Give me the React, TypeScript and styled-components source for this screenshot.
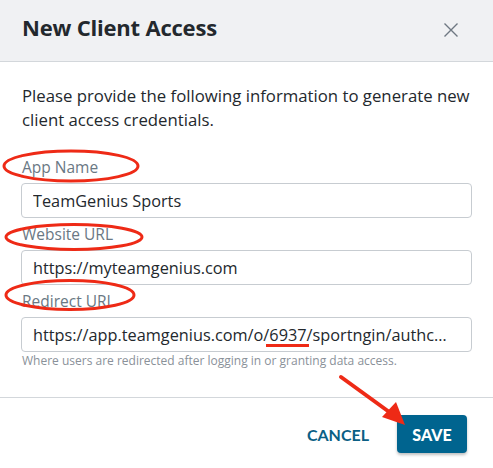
import React from "react";
import { createGlobalStyle, styled } from "styled-components";

const GlobalStyle = createGlobalStyle`
  html, body {
    margin: 0;
    padding: 0;
    background: #fff;
  }
  body {
    font-family: "Open Sans", "Liberation Sans", sans-serif;
    color: #22272c;
  }
`;

type Field = {
  label: string;
  value: string;
  help?: string;
};

const fields: Field[] = [
  { label: "App Name", value: "TeamGenius Sports" },
  { label: "Website URL", value: "https://myteamgenius.com" },
  {
    label: "Redirect URI",
    value: "https://app.teamgenius.com/o/6937/sportngin/authcallback",
    help: "Where users are redirected after logging in or granting data access.",
  },
];

const CloseIcon = () => (
  <svg width="16" height="16" viewBox="0 0 16 16">
    <path d="M1.5 1.5 L14.5 14.5 M14.5 1.5 L1.5 14.5" stroke="#6e7882" strokeWidth="1.4" fill="none" />
  </svg>
);

// red markup drawn on top of the screenshot
const Markup = () => (
  <svg width="493" height="468" viewBox="0 0 493 468">
    <g fill="none" stroke="#ee2a16" strokeWidth="3">
      <ellipse cx="71" cy="166" rx="67" ry="15" />
      <ellipse cx="74" cy="237" rx="68" ry="12.5" />
      <ellipse cx="70" cy="295" rx="64" ry="14.5" />
      <line x1="266" y1="345.5" x2="309" y2="345.5" />
      <line x1="341" y1="377" x2="392" y2="414" strokeWidth="4" strokeLinecap="round" />
    </g>
    <polygon points="405,425 382,417 396,402" fill="#ee2a16" />
  </svg>
);

const App = () => {
  return (
    <>
      <GlobalStyle />
      <Modal>
        <Header>
          <Title>New Client Access</Title>
          <CloseButton aria-label="Close">
            <CloseIcon />
          </CloseButton>
        </Header>
        <Body>
          <Intro>
            Please provide the following information to generate new client access credentials.
          </Intro>
          {fields.map((f) => (
            <FieldBox key={f.label}>
              <Label>{f.label}</Label>
              <Input readOnly value={f.value} />
              {f.help && <Help>{f.help}</Help>}
            </FieldBox>
          ))}
        </Body>
        <Footer>
          <TextButton>CANCEL</TextButton>
          <PrimaryButton>SAVE</PrimaryButton>
        </Footer>
        <Overlay>
          <Markup />
        </Overlay>
      </Modal>
    </>
  );
};

const Modal = styled.div`
  position: relative;
  width: 493px;
  height: 468px;
  background: #fff;
  overflow: hidden;
`;

const Header = styled.div`
  height: 62px;
  box-sizing: border-box;
  padding: 0 34px 2px 22px;
  display: flex;
  align-items: center;
  justify-content: space-between;
  background: #f0f1f3;
  border-bottom: 1px solid #d3d7db;
`;

const Title = styled.h1`
  margin: 0 0 6px 0;
  font-size: 22px;
  font-weight: 700;
  color: #23282d;
  letter-spacing: -0.2px;
`;

const CloseButton = styled.button`
  border: 0;
  background: none;
  padding: 0;
  display: flex;
  cursor: pointer;
`;

const Body = styled.div`
  padding: 22px 21px 0 21px;
  height: 336px;
  box-sizing: border-box;
  border-bottom: 1px solid #d3d7db;
`;

const Intro = styled.p`
  margin: 0 0 25px 1px;
  font-size: 16.75px;
  line-height: 24px;
  color: #23282d;
`;

const FieldBox = styled.div`
  display: flex;
  flex-direction: column;
  margin-bottom: 6px;
`;

const Label = styled.label`
  font-size: 15.5px;
  line-height: 20px;
  color: #6a7884;
  margin: 0 0 6px 1px;
`;

const Input = styled.input`
  box-sizing: border-box;
  height: 35px;
  width: 451px;
  padding: 0 22px 0 11px;
  border: 1px solid #c7ccd1;
  border-radius: 4px;
  font-family: "Open Sans", "Liberation Sans", sans-serif;
  font-size: 16.3px;
  color: #23282d;
  text-overflow: ellipsis;
  outline: none;
`;

const Help = styled.div`
  font-size: 12px;
  line-height: 16px;
  color: #8a9199;
  margin: 1px 0 0 1px;
`;

const Footer = styled.div`
  display: flex;
  justify-content: flex-end;
  align-items: center;
  gap: 28px;
  padding: 17px 26px 0 0;
`;

const TextButton = styled.button`
  border: 0;
  background: none;
  padding: 0;
  font-family: Lato, "Liberation Sans", sans-serif;
  font-weight: 700;
  font-size: 16px;
  color: #0b5f85;
  cursor: pointer;
`;

const PrimaryButton = styled.button`
  border: 0;
  width: 70px;
  height: 38px;
  border-radius: 4px;
  background: #00648f;
  color: #fff;
  font-family: Lato, "Liberation Sans", sans-serif;
  font-weight: 900;
  font-size: 16px;
  box-shadow: 0 2px 3px rgba(0, 0, 0, 0.25);
  cursor: pointer;
`;

const Overlay = styled.div`
  position: absolute;
  inset: 0;
  pointer-events: none;
`;

export default App;
